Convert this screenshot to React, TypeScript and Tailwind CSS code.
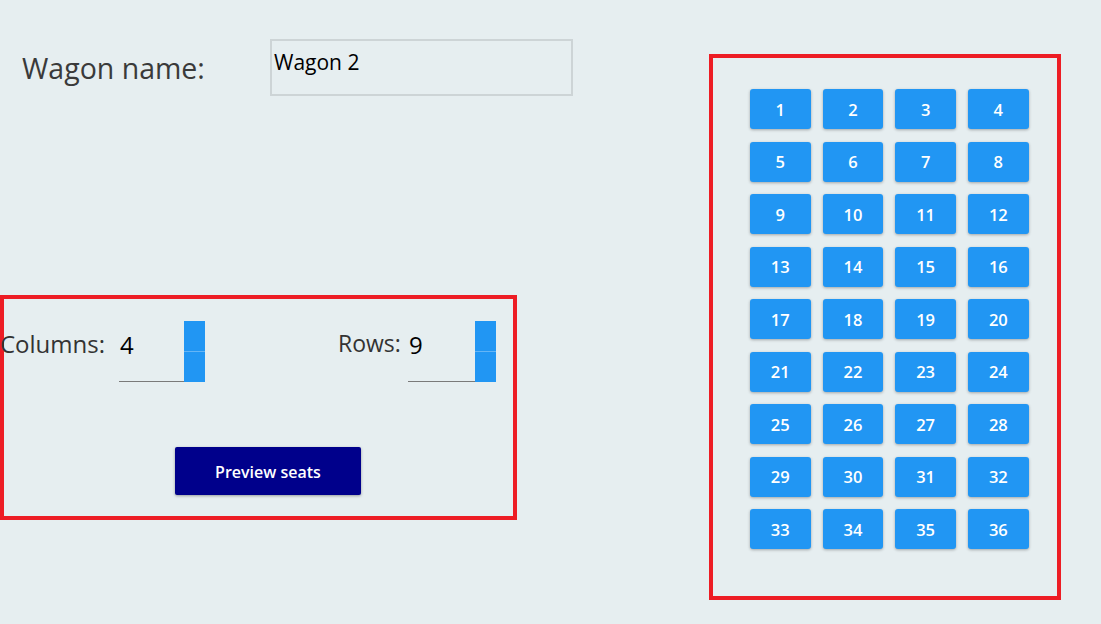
import React from "react";

const seats = Array.from({ length: 36 }, (_, i) => i + 1);

const NumberBox = ({ value, width }: { value: number; width: string }) => {
    return (
        <div className={`flex h-[61px] ${width}`}>
            <div className="flex-1 border-b border-[#7a7a7a] text-[24px] leading-none text-black pt-[12px] pl-[1px]">
                {value}
            </div>
            <div className="w-[21px] flex flex-col">
                <div className="h-[31px] bg-[#2196f3] border-b border-[#64b5f6]" />
                <div className="flex-1 bg-[#2196f3]" />
            </div>
        </div>
    );
};

export default function App() {
    return (
        <div className="w-[1101px] h-[624px] bg-[#e6eef0] flex font-['Open_Sans',sans-serif] text-[#333] overflow-hidden">
            <div className="w-[709px] flex flex-col">
                <div className="flex items-start pt-[39px]">
                    <span className="ml-[22px] mt-[15px] w-[248px] text-[28.5px] leading-none text-[#3a3a3a]">Wagon name:</span>
                    <div className="w-[303px] h-[57px] border-2 border-[#cdd4d6] px-[2px] pt-[11px] text-[21px] leading-none text-black">
                        Wagon 2
                    </div>
                </div>

                <div className="mt-[199px] w-[517px] h-[225px] border-4 border-[#ed1c24] flex flex-col">
                    <div className="flex items-start -ml-[4px] mt-[22px]">
                        <span className="text-[24px] leading-none text-[#333] mt-[11px] w-[119px]">Columns:</span>
                        <NumberBox value={4} width="w-[86px]" />
                        <span className="text-[23px] leading-none text-[#333] mt-[11px] ml-[133px] w-[70px]">Rows:</span>
                        <NumberBox value={9} width="w-[88px]" />
                    </div>
                    <button className="mt-[65px] ml-[171px] w-[186px] h-[48px] bg-[#00008b] text-white text-[16px] font-semibold rounded-[2px] shadow-[0_1px_3px_rgba(0,0,0,0.35)] pt-[1px]">
                        Preview seats
                    </button>
                </div>
            </div>

            <div className="mt-[54px] w-[352px] h-[546px] border-4 border-[#ed1c24] pl-[37px] pt-[31px]">
                <div className="grid grid-cols-[repeat(4,60.5px)] gap-x-[12.2px] gap-y-[12.5px]">
                    {seats.map((n) => (
                        <div
                            key={n}
                            className="h-[40px] bg-[#2196f3] rounded-[3px] shadow-[0_1px_3px_rgba(0,0,0,0.3)] flex items-center justify-center text-white text-[16.5px] font-semibold pt-[2px]"
                        >
                            {n}
                        </div>
                    ))}
                </div>
            </div>
        </div>
    );
}
